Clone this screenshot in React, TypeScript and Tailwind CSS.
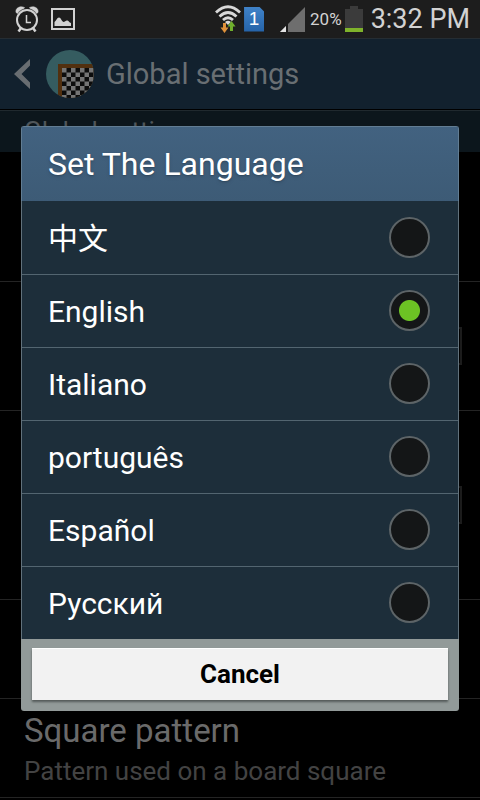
import React, { useState } from "react";

const languages = [
  { id: "zh", name: "中文" },
  { id: "en", name: "English" },
  { id: "it", name: "Italiano" },
  { id: "pt", name: "português" },
  { id: "es", name: "Español" },
  { id: "ru", name: "Русский" },
];

const AlarmIcon = () => (
  <svg width="26" height="28" viewBox="0 0 26 28" fill="none" stroke="#d2d2d2">
    <circle cx="13" cy="15" r="10" strokeWidth="2" />
    <path d="M12.500 10v7.500H17" strokeWidth="1.500" />
    <path d="M7 23 4.500 26.500M19 23 21.500 26.500" strokeWidth="2.500" />
    <path
      d="M2 7.500C1 3 6 .5 10.500 2.500L10 3.500C7 4.500 5 6 3.500 8.500ZM24 7.500C25 3 20 .5 15.500 2.500L16 3.500C19 4.500 21 6 22.500 8.500Z"
      fill="#d2d2d2"
      stroke="#d2d2d2"
      strokeWidth="0.500"
    />
  </svg>
);

const PictureIcon = () => (
  <svg width="24" height="22" viewBox="0 0 24 22">
    <rect x="1" y="1" width="22" height="20" fill="none" stroke="#d2d2d2" strokeWidth="2" />
    <path
      d="M3.500 18v-4c1.500-1 2.500-4.500 4.500-4.500S10.500 13 12.500 14c1.500-.5 2.500-2 4-1.500s1.500 2 3.500 2.500v3z"
      fill="#d2d2d2"
    />
  </svg>
);

const WifiIcon = () => (
  <svg width="28" height="28" viewBox="0 0 28 28" fill="none">
    <g stroke="#d8d8d8" strokeWidth="2.800">
      <path d="M2 7.500Q14-4 26 7.500" />
      <path d="M5.500 11.500Q14 3.500 22.500 11.500" />
      <path d="M9 15Q14 10.500 19 15" />
    </g>
    <path d="M11 17q3-2.500 6 0l-3 3z" fill="#d8d8d8" />
    <path d="M9 18h3v4.500h2.500L10.500 28 6.500 22.500H9z" fill="#e0913a" />
    <path d="M16 26v-4.500h-2.500l4-5.500 4 5.500H19V26z" fill="#6fae2c" />
  </svg>
);

const SignalIcon = () => (
  <svg width="25" height="25" viewBox="0 0 25 25">
    <path d="M25 0v25H0z" fill="#6e6e6e" />
    <path d="M6 17v8h2V15z" fill="#1d1d1d" />
    <path d="M6 19v6H0z" fill="#e4e4e4" />
  </svg>
);

const BatteryIcon = () => (
  <svg width="18" height="26" viewBox="0 0 18 26">
    <path d="M5 0h8v3h5v19H0V3h5z" fill="#3b3b3b" />
    <rect y="22" width="18" height="4" fill="#7fb32b" />
  </svg>
);

const SimIcon = () => (
  <div className="flex h-[25px] w-5 items-center justify-center bg-linear-to-b from-[#4083c9] to-[#2563a8] font-['Liberation_Sans'] text-[19px] text-white [clip-path:polygon(0_0,75%_0,100%_20%,100%_100%,0_100%)]">
    1
  </div>
);

const AppIcon = () => (
  <svg width="48" height="48" viewBox="0 0 48 48">
    <defs>
      <clipPath id="disc">
        <circle cx="24" cy="24" r="24" />
      </clipPath>
      <pattern id="squares" x="16" y="18" width="9" height="9" patternUnits="userSpaceOnUse">
        <rect width="9" height="9" fill="#747474" />
        <path d="M4.500 0H9v4.500H4.500zM0 4.500h4.500V9H0z" fill="#0c0c0c" />
      </pattern>
    </defs>
    <g clipPath="url(#disc)">
      <rect width="48" height="48" fill="#355c60" />
      <path d="M12 14h36v34H12z" fill="#52300f" />
      <path d="M16 18h32v30H16z" fill="url(#squares)" />
    </g>
  </svg>
);

const StatusBar = () => (
  <div className="flex h-[38px] items-center justify-between bg-[#1d1d1d] pr-[10px] pl-[14px] text-[#d2d2d2]">
    <div className="flex items-center gap-[11px]">
      <AlarmIcon />
      <PictureIcon />
    </div>
    <div className="flex items-center">
      <WifiIcon />
      <div className="ml-0.5">
        <SimIcon />
      </div>
      <div className="ml-4">
        <SignalIcon />
      </div>
      <span className="ml-[5px] pt-0.5 text-[17px]">20%</span>
      <div className="ml-[3px]">
        <BatteryIcon />
      </div>
      <span className="ml-2 text-[27px]">3:32 PM</span>
    </div>
  </div>
);

const ActionBar = () => (
  <header className="flex h-[72px] items-center border-t border-b border-t-[#252d33] border-b-black bg-[#12212e] pl-[14px]">
    <button type="button" aria-label="Back" className="mr-[15px]">
      <svg width="17" height="30" viewBox="0 0 17 30">
        <path d="M16 0v6.500L7.500 15l8.500 8.500V30L0 15z" fill="#686d71" />
      </svg>
    </button>
    <AppIcon />
    <h1 className="ml-3 pt-0.5 text-[29px] text-[#696f73]">Global settings</h1>
  </header>
);

const Settings = () => (
  <main>
    <h2 className="h-[42px] border-t border-[#20292e] bg-[#0c161c] pt-px pl-6 text-[26px] text-[#50565a]">
      Global settings
    </h2>
    <div className="h-[130px] border-b border-[#242424]" />
    <div className="flex h-[129px] items-center justify-end border-b border-[#242424] pr-[18px]">
      <input
        type="checkbox"
        aria-label="First option"
        className="size-[38px] appearance-none border-2 border-[#1c1c1c]"
      />
    </div>
    <div className="flex h-[189px] items-center justify-end border-b border-[#242424] pr-[18px]">
      <input
        type="checkbox"
        aria-label="Second option"
        className="size-[38px] appearance-none border-2 border-[#1c1c1c]"
      />
    </div>
    <div className="h-[99px] border-b border-[#242424]" />
    <div className="h-[99px] border-b border-[#242424] pt-3 pl-6">
      <p className="text-[33px] leading-10 text-[#6a6a6a]">Square pattern</p>
      <p className="text-[26px] leading-10 text-[#434343]">
        Pattern used on a board square
      </p>
    </div>
  </main>
);

const LanguageDialog = () => {
  const [selected, setSelected] = useState("en");

  return (
    <div
      role="dialog"
      aria-labelledby="dialog-title"
      className="w-full overflow-hidden rounded-[3px]"
    >
      <h2
        id="dialog-title"
        className="flex h-[75px] items-center border border-b-0 border-[#627d93] bg-linear-to-b from-[#426280] to-[#3d5b76] pl-[26px] text-[32px] text-white text-shadow-md"
      >
        Set The Language
      </h2>
      <div className="divide-y divide-[#536570] border-x border-[#62727c] bg-[#1d2e3a] pt-px">
        {languages.map((language) => (
          <label
            key={language.id}
            className="box-content flex h-[70px] items-center justify-between pr-7 pb-0.5 pl-[26px] text-[30px] text-white"
          >
            <span className="pt-0.5">{language.name}</span>
            <input
              type="radio"
              name="language"
              value={language.id}
              checked={selected === language.id}
              onChange={() => setSelected(language.id)}
              className="size-[41px] appearance-none rounded-full border-2 border-[#5d6467] bg-[#141617] checked:bg-[radial-gradient(circle,#6cc324_10px,#141617_11px)]"
            />
          </label>
        ))}
      </div>
      <div className="bg-[#929a99] px-[11px] pt-[9px] pb-[11px]">
        <button
          type="button"
          className="block h-[52px] w-full border-t border-white bg-[#f2f2f2] text-[26px] font-bold text-black shadow-[0_2px_2px_#555c5b]"
        >
          Cancel
        </button>
      </div>
    </div>
  );
};

export default function App() {
  return (
    <div className="relative min-h-screen overflow-hidden bg-black font-[Roboto,'Noto_Sans_CJK_SC',sans-serif]">
      <StatusBar />
      <ActionBar />
      <Settings />
      <div className="absolute inset-0 flex items-center px-[21px] pt-[38px] pb-px">
        <LanguageDialog />
      </div>
    </div>
  );
}
